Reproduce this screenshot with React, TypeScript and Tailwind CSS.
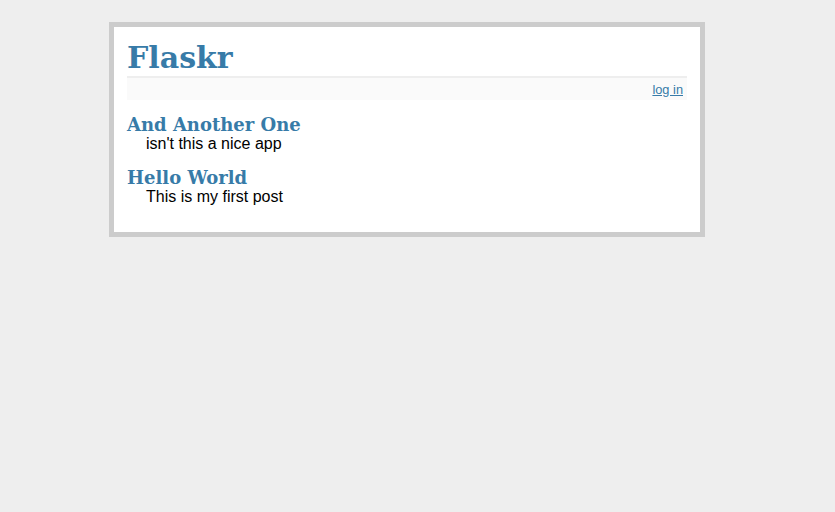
const entries = [
  { id: 1, title: "And Another One", text: "isn't this a nice app" },
  { id: 2, title: "Hello World", text: "This is my first post" },
];

export default function App() {
  return (
    <div className="min-h-screen bg-[#eee] pt-[22px] font-['Liberation_Sans',Arial,sans-serif] text-black">
      <div className="ml-[109px] w-[596px] border-[5px] border-[#ccc] bg-white px-[13px] pt-[13px] pb-[12px]">
        <h1 className="border-b-2 border-[#eee] font-['DejaVu_Serif',Georgia,serif] text-[30px] font-bold leading-[36px] text-[#377BA8]">
          Flaskr
        </h1>
        <div className="mb-[14px] bg-[#fafafa] px-[4px] pt-[5px] pb-[3px] text-right text-[12.8px] leading-[14px]">
          <a href="#" className="text-[#377BA8] underline">
            log in
          </a>
        </div>
        <ul>
          {entries.map((entry) => (
            <li key={entry.id} className="mx-[19px] mb-[14px]">
              <h2 className="-ml-[19px] font-['DejaVu_Serif',Georgia,serif] text-[18px] font-bold leading-[21px] text-[#377BA8]">
                {entry.title}
              </h2>
              <div className="text-[16px] leading-[18px]">{entry.text}</div>
            </li>
          ))}
        </ul>
      </div>
    </div>
  );
}
